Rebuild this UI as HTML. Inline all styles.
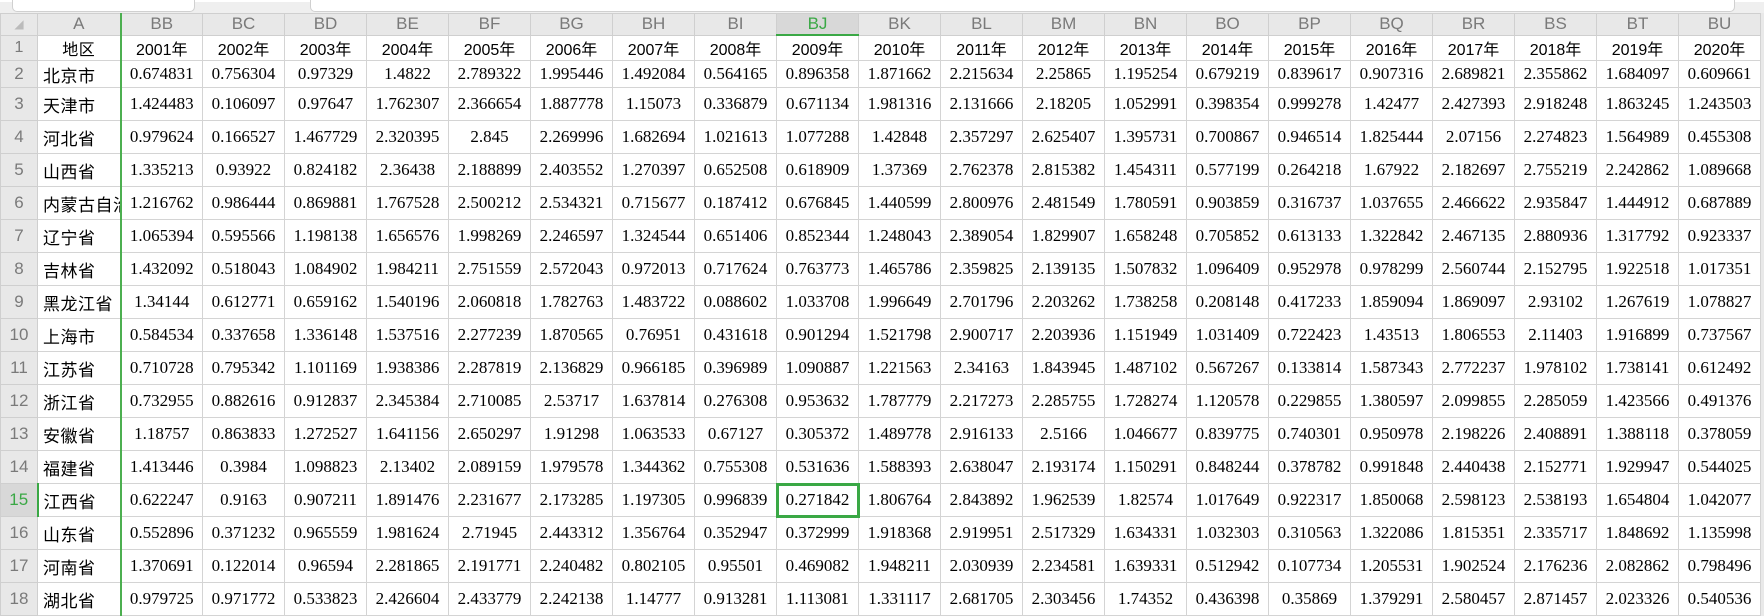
<!DOCTYPE html>
<html><head><meta charset="utf-8"><style>
body{margin:0;width:1764px;height:611px;overflow:hidden;background:#e9e9e9;position:relative}
.top{position:absolute;left:0;top:0;width:1764px;height:13px;background:#efefef;border-top:2px solid #fff;box-sizing:border-box}
.top i{position:absolute;top:-10px;height:18px;background:#fff;border:1px solid #d0d0d0;border-radius:5px}
table{position:absolute;left:0;top:13px;border-collapse:collapse;table-layout:fixed;width:1760px}
td{border:1px solid #d4d4d4;padding:0;text-align:center;font-family:"Liberation Serif",serif;font-size:17px;color:#000;background:#fff;white-space:nowrap;overflow:hidden}
tr.h td{background:#e8e8e8;font-family:"Liberation Sans",sans-serif;color:#7a7a7a;font-size:17px;height:20px;border-color:#cfcfcf}
td.r{background:#e8e8e8;font-family:"Liberation Sans",sans-serif;color:#7a7a7a;font-size:17px;border-color:#cfcfcf}
td.a{text-align:left;padding-left:5px;font-family:"Liberation Sans","Noto Sans CJK SC",sans-serif;font-size:17px;border-right:2px solid #4caf50;letter-spacing:0.5px}
tr.y td{font-family:"Liberation Sans","Noto Sans CJK SC",sans-serif;font-size:16px;height:21px}
tr.d td{height:32px}
tr.d2 td{height:26px}
td.sel{outline:3px solid #3aa845;outline-offset:-2px;position:relative}
td.selh{color:#3aa845!important;background:#d8d8d8!important;border-bottom:2px solid #3aa845!important}
td.selr{color:#3aa845!important;background:#d8d8d8!important;border-right:2px solid #3aa845!important}
</style></head><body>
<div class="top"><i style="left:12px;width:181px"></i><i style="left:310px;width:1423px"></i></div>
<table>
<colgroup><col style="width:37px"><col style="width:83px"><col span="20" style="width:82px"></colgroup>
<tr class="h"><td style="font-size:12px;color:#bbb">◢</td><td style="border-right:2px solid #4caf50">A</td><td>BB</td><td>BC</td><td>BD</td><td>BE</td><td>BF</td><td>BG</td><td>BH</td><td>BI</td><td class="selh">BJ</td><td>BK</td><td>BL</td><td>BM</td><td>BN</td><td>BO</td><td>BP</td><td>BQ</td><td>BR</td><td>BS</td><td>BT</td><td>BU</td></tr>
<tr class="y"><td class="r">1</td><td class="a" style="text-align:center;padding-left:0">地区</td><td>2001年</td><td>2002年</td><td>2003年</td><td>2004年</td><td>2005年</td><td>2006年</td><td>2007年</td><td>2008年</td><td>2009年</td><td>2010年</td><td>2011年</td><td>2012年</td><td>2013年</td><td>2014年</td><td>2015年</td><td>2016年</td><td>2017年</td><td>2018年</td><td>2019年</td><td>2020年</td></tr>
<tr class="d2"><td class="r">2</td><td class="a">北京市</td><td>0.674831</td><td>0.756304</td><td>0.97329</td><td>1.4822</td><td>2.789322</td><td>1.995446</td><td>1.492084</td><td>0.564165</td><td>0.896358</td><td>1.871662</td><td>2.215634</td><td>2.25865</td><td>1.195254</td><td>0.679219</td><td>0.839617</td><td>0.907316</td><td>2.689821</td><td>2.355862</td><td>1.684097</td><td>0.609661</td></tr>
<tr class="d"><td class="r">3</td><td class="a">天津市</td><td>1.424483</td><td>0.106097</td><td>0.97647</td><td>1.762307</td><td>2.366654</td><td>1.887778</td><td>1.15073</td><td>0.336879</td><td>0.671134</td><td>1.981316</td><td>2.131666</td><td>2.18205</td><td>1.052991</td><td>0.398354</td><td>0.999278</td><td>1.42477</td><td>2.427393</td><td>2.918248</td><td>1.863245</td><td>1.243503</td></tr>
<tr class="d"><td class="r">4</td><td class="a">河北省</td><td>0.979624</td><td>0.166527</td><td>1.467729</td><td>2.320395</td><td>2.845</td><td>2.269996</td><td>1.682694</td><td>1.021613</td><td>1.077288</td><td>1.42848</td><td>2.357297</td><td>2.625407</td><td>1.395731</td><td>0.700867</td><td>0.946514</td><td>1.825444</td><td>2.07156</td><td>2.274823</td><td>1.564989</td><td>0.455308</td></tr>
<tr class="d"><td class="r">5</td><td class="a">山西省</td><td>1.335213</td><td>0.93922</td><td>0.824182</td><td>2.36438</td><td>2.188899</td><td>2.403552</td><td>1.270397</td><td>0.652508</td><td>0.618909</td><td>1.37369</td><td>2.762378</td><td>2.815382</td><td>1.454311</td><td>0.577199</td><td>0.264218</td><td>1.67922</td><td>2.182697</td><td>2.755219</td><td>2.242862</td><td>1.089668</td></tr>
<tr class="d"><td class="r">6</td><td class="a">内蒙古自治</td><td>1.216762</td><td>0.986444</td><td>0.869881</td><td>1.767528</td><td>2.500212</td><td>2.534321</td><td>0.715677</td><td>0.187412</td><td>0.676845</td><td>1.440599</td><td>2.800976</td><td>2.481549</td><td>1.780591</td><td>0.903859</td><td>0.316737</td><td>1.037655</td><td>2.466622</td><td>2.935847</td><td>1.444912</td><td>0.687889</td></tr>
<tr class="d"><td class="r">7</td><td class="a">辽宁省</td><td>1.065394</td><td>0.595566</td><td>1.198138</td><td>1.656576</td><td>1.998269</td><td>2.246597</td><td>1.324544</td><td>0.651406</td><td>0.852344</td><td>1.248043</td><td>2.389054</td><td>1.829907</td><td>1.658248</td><td>0.705852</td><td>0.613133</td><td>1.322842</td><td>2.467135</td><td>2.880936</td><td>1.317792</td><td>0.923337</td></tr>
<tr class="d"><td class="r">8</td><td class="a">吉林省</td><td>1.432092</td><td>0.518043</td><td>1.084902</td><td>1.984211</td><td>2.751559</td><td>2.572043</td><td>0.972013</td><td>0.717624</td><td>0.763773</td><td>1.465786</td><td>2.359825</td><td>2.139135</td><td>1.507832</td><td>1.096409</td><td>0.952978</td><td>0.978299</td><td>2.560744</td><td>2.152795</td><td>1.922518</td><td>1.017351</td></tr>
<tr class="d"><td class="r">9</td><td class="a">黑龙江省</td><td>1.34144</td><td>0.612771</td><td>0.659162</td><td>1.540196</td><td>2.060818</td><td>1.782763</td><td>1.483722</td><td>0.088602</td><td>1.033708</td><td>1.996649</td><td>2.701796</td><td>2.203262</td><td>1.738258</td><td>0.208148</td><td>0.417233</td><td>1.859094</td><td>1.869097</td><td>2.93102</td><td>1.267619</td><td>1.078827</td></tr>
<tr class="d"><td class="r">10</td><td class="a">上海市</td><td>0.584534</td><td>0.337658</td><td>1.336148</td><td>1.537516</td><td>2.277239</td><td>1.870565</td><td>0.76951</td><td>0.431618</td><td>0.901294</td><td>1.521798</td><td>2.900717</td><td>2.203936</td><td>1.151949</td><td>1.031409</td><td>0.722423</td><td>1.43513</td><td>1.806553</td><td>2.11403</td><td>1.916899</td><td>0.737567</td></tr>
<tr class="d"><td class="r">11</td><td class="a">江苏省</td><td>0.710728</td><td>0.795342</td><td>1.101169</td><td>1.938386</td><td>2.287819</td><td>2.136829</td><td>0.966185</td><td>0.396989</td><td>1.090887</td><td>1.221563</td><td>2.34163</td><td>1.843945</td><td>1.487102</td><td>0.567267</td><td>0.133814</td><td>1.587343</td><td>2.772237</td><td>1.978102</td><td>1.738141</td><td>0.612492</td></tr>
<tr class="d"><td class="r">12</td><td class="a">浙江省</td><td>0.732955</td><td>0.882616</td><td>0.912837</td><td>2.345384</td><td>2.710085</td><td>2.53717</td><td>1.637814</td><td>0.276308</td><td>0.953632</td><td>1.787779</td><td>2.217273</td><td>2.285755</td><td>1.728274</td><td>1.120578</td><td>0.229855</td><td>1.380597</td><td>2.099855</td><td>2.285059</td><td>1.423566</td><td>0.491376</td></tr>
<tr class="d"><td class="r">13</td><td class="a">安徽省</td><td>1.18757</td><td>0.863833</td><td>1.272527</td><td>1.641156</td><td>2.650297</td><td>1.91298</td><td>1.063533</td><td>0.67127</td><td>0.305372</td><td>1.489778</td><td>2.916133</td><td>2.5166</td><td>1.046677</td><td>0.839775</td><td>0.740301</td><td>0.950978</td><td>2.198226</td><td>2.408891</td><td>1.388118</td><td>0.378059</td></tr>
<tr class="d"><td class="r">14</td><td class="a">福建省</td><td>1.413446</td><td>0.3984</td><td>1.098823</td><td>2.13402</td><td>2.089159</td><td>1.979578</td><td>1.344362</td><td>0.755308</td><td>0.531636</td><td>1.588393</td><td>2.638047</td><td>2.193174</td><td>1.150291</td><td>0.848244</td><td>0.378782</td><td>0.991848</td><td>2.440438</td><td>2.152771</td><td>1.929947</td><td>0.544025</td></tr>
<tr class="d"><td class="r selr">15</td><td class="a">江西省</td><td>0.622247</td><td>0.9163</td><td>0.907211</td><td>1.891476</td><td>2.231677</td><td>2.173285</td><td>1.197305</td><td>0.996839</td><td class="sel">0.271842</td><td>1.806764</td><td>2.843892</td><td>1.962539</td><td>1.82574</td><td>1.017649</td><td>0.922317</td><td>1.850068</td><td>2.598123</td><td>2.538193</td><td>1.654804</td><td>1.042077</td></tr>
<tr class="d"><td class="r">16</td><td class="a">山东省</td><td>0.552896</td><td>0.371232</td><td>0.965559</td><td>1.981624</td><td>2.71945</td><td>2.443312</td><td>1.356764</td><td>0.352947</td><td>0.372999</td><td>1.918368</td><td>2.919951</td><td>2.517329</td><td>1.634331</td><td>1.032303</td><td>0.310563</td><td>1.322086</td><td>1.815351</td><td>2.335717</td><td>1.848692</td><td>1.135998</td></tr>
<tr class="d"><td class="r">17</td><td class="a">河南省</td><td>1.370691</td><td>0.122014</td><td>0.96594</td><td>2.281865</td><td>2.191771</td><td>2.240482</td><td>0.802105</td><td>0.95501</td><td>0.469082</td><td>1.948211</td><td>2.030939</td><td>2.234581</td><td>1.639331</td><td>0.512942</td><td>0.107734</td><td>1.205531</td><td>1.902524</td><td>2.176236</td><td>2.082862</td><td>0.798496</td></tr>
<tr class="d"><td class="r">18</td><td class="a">湖北省</td><td>0.979725</td><td>0.971772</td><td>0.533823</td><td>2.426604</td><td>2.433779</td><td>2.242138</td><td>1.14777</td><td>0.913281</td><td>1.113081</td><td>1.331117</td><td>2.681705</td><td>2.303456</td><td>1.74352</td><td>0.436398</td><td>0.35869</td><td>1.379291</td><td>2.580457</td><td>2.871457</td><td>2.023326</td><td>0.540536</td></tr>
</table>
</body></html>
